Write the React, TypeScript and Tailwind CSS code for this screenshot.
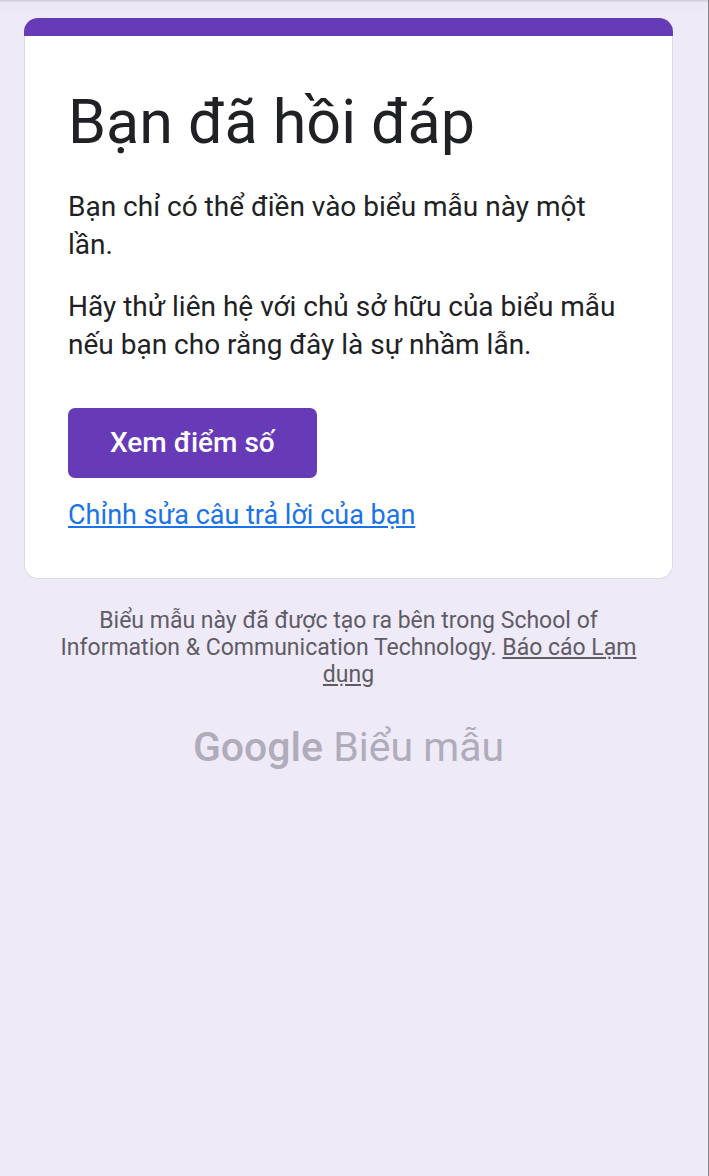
export default function App() {
  return (
    <div className="min-h-screen border-r border-[#85828d] bg-[#eeeaf8] font-[Roboto,sans-serif] text-[#202124]">
      <div className="h-[18px] bg-linear-to-b from-[#cbc8d4] via-[#ebe7f4] via-15% to-[#eeeaf8]" />
      <div className="pr-[35px] pl-6">
        <main>
          <div className="h-[18px] rounded-t-[14px] bg-[#673ab7]" />
          <div className="rounded-b-[14px] border border-t-0 border-[#dadce0] bg-white px-[43px] pt-[50px] pb-11">
            <h1 className="text-[61px] leading-[72px]">Bạn đã hồi đáp</h1>
            <p className="mt-[30px] text-[28px] leading-[38px]">Bạn chỉ có thể điền vào biểu mẫu này một lần.</p>
            <p className="mt-6 text-[28px] leading-[38px]">Hãy thử liên hệ với chủ sở hữu của biểu mẫu nếu bạn cho rằng đây là sự nhầm lẫn.</p>
            <button type="button" className="mt-11 block h-[70px] rounded-[7px] bg-[#673ab7] px-[42px] text-[28px] leading-[38px] font-medium text-white">Xem điểm số</button>
            <a href="#edit" className="mt-[18px] block w-fit text-[27px] leading-[38px] text-[#1a73e8] underline">Chỉnh sửa câu trả lời của bạn</a>
          </div>
        </main>
        <footer className="mt-7 px-8 text-center text-[23px] leading-[27px] text-[#5f5c66]">
          <p>Biểu mẫu này đã được tạo ra bên trong School of Information &amp; Communication Technology. <a href="#report" className="underline">Báo cáo Lạm dụng</a></p>
          <p className="mt-8 text-[41px] leading-[54px] text-[#b0acb9]"><span className="font-medium">Google</span> Biểu mẫu</p>
        </footer>
      </div>
    </div>
  );
}
